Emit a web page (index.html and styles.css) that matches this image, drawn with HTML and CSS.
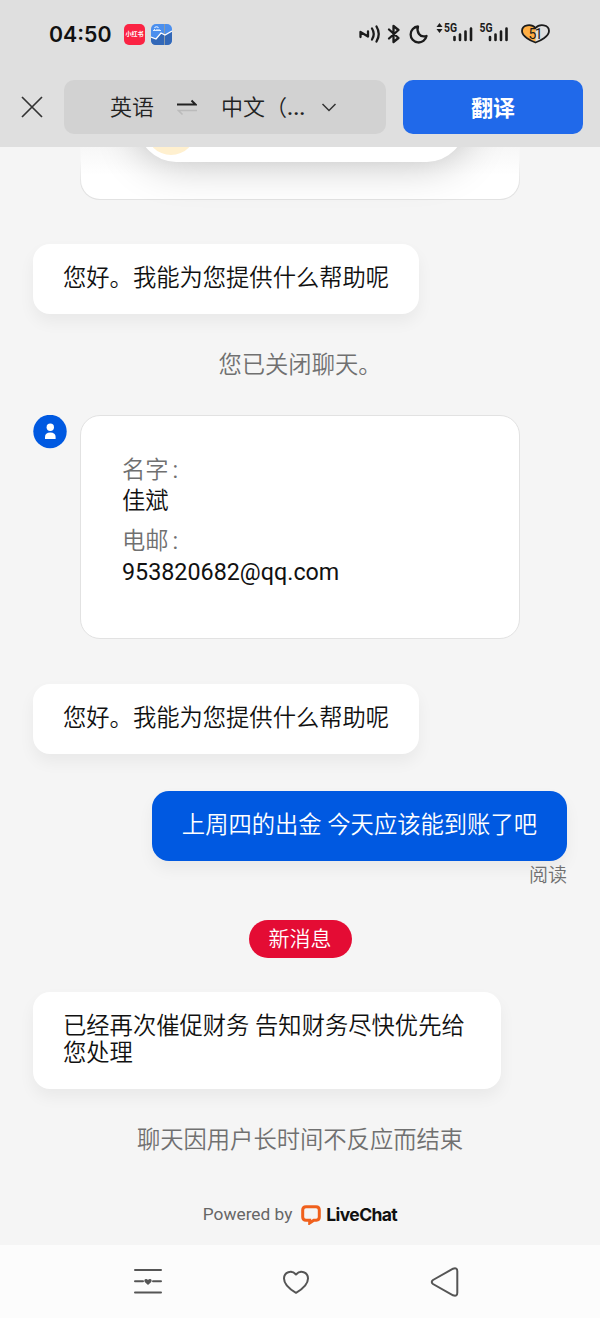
FILE: index.html
```html
<!DOCTYPE html>
<html lang="zh-CN">
  <head>
    <meta charset="UTF-8" />
    <meta name="viewport" content="width=device-width, initial-scale=1.0" />
    <title>LiveChat</title>
    <link rel="stylesheet" href="styles.css">
  </head>
  <body>
    <header class="header">
      <div class="status">
        <span class="time">04:50</span>
        <span class="app-red">小红书</span>
        <svg class="app-blue" width="21" height="21" viewBox="0 0 21 21">
          <rect width="21" height="21" rx="5" fill="#4b8fee" />
          <path d="M0 13l5 2 5-6 4 2 7-4v9q0 5-5 5H5q-5 0-5-5z" fill="#3268b8" />
          <path d="M13.5 0v21" stroke="#8a9aa8" stroke-width="1" />
          <path d="M0 13l5 2 5-6 4 2 7-4" fill="none" stroke="#fff" stroke-width="1.3" />
          <path d="M3.500 4q2-2.500 4 0M2 6.500h8M3.500 5v2M6 5v2M8 5v2" fill="none" stroke="#dcecff" stroke-width="1.2" />
        </svg>
        <svg class="signals" width="194" height="26" viewBox="358 21 194 26">
          <g fill="none" stroke="#1b1b1b" stroke-width="2.3" stroke-linecap="round" stroke-linejoin="round">
            <path d="M360.500 37v-5l7.500 4.500v-5M372 28.500q3.500 5.500 0 11M376.500 26.500q4.500 7.500 0 15" />
            <path d="M389 29.500l9.500 8.500-5 4v-16l5 4-9.500 8.500" />
            <path d="M418 26.500a8 8 0 1 0 8.500 9.500q-5 1.500-7.500-2t-1-7.500z" />
          </g>
          <path d="M436.500 27l3-4 3 4zM436.500 29l3 4 3-4z" fill="#1b1b1b" />
          <g class="net">
            <text x="444" y="32" textLength="13" lengthAdjust="spacingAndGlyphs">5G</text>
            <text x="479.500" y="32" textLength="13" lengthAdjust="spacingAndGlyphs">5G</text>
          </g>
          <path d="M454.500 37v3M460 34.500v5.500M465.500 31.500v8.500M471 28.500v11.500M490 37v3M495.500 34.500v5.500M501 31.500v8.500M506.500 28.500v11.500" stroke="#1b1b1b" stroke-width="2.600" stroke-linecap="round" />
          <path d="M535.500 42q-13-5.500-13-11.500c0-7 10-7 13-2.500v14z" fill="#ffae43" />
          <path d="M535.500 42.500c-4.500-1.500-13.500-6-13.500-11.500 0-6.500 9.500-7.500 13.500-3 4-4.500 13.500-3.500 13.500 3 0 5.500-9 10-13.500 11.500z" fill="none" stroke="#1b1b1b" stroke-width="1.800" />
          <text class="battery" x="528.500" y="39" textLength="14">51</text>
        </svg>
      </div>
      <div class="translate">
        <svg class="close" width="22" height="22" viewBox="0 0 22 22">
          <path d="M1 1l20 20M21 1L1 21" fill="none" stroke="#333" stroke-width="1.700" />
        </svg>
        <div class="languages">
          <span>英语</span>
          <svg class="swap" width="20" height="17" viewBox="0 0 20 17">
            <path d="M0 5.500h18.500L14.500 1.500" fill="none" stroke="#222" stroke-width="2" />
            <path d="M20 11.500H1.500l4 4" fill="none" stroke="#bbb" stroke-width="1.600" />
          </svg>
          <span class="to">中文（<span class="dots">...</span></span>
          <svg class="arrow" width="16" height="9" viewBox="0 0 16 9">
            <path d="M1.500 1l6.500 6.500L14.500 1" fill="none" stroke="#333" stroke-width="1.500" />
          </svg>
        </div>
        <button class="translate-btn">翻译</button>
      </div>
    </header>

    <main class="chat">
      <div class="history">
        <div class="old-card">
          <div class="popup"><span class="popup-dot"></span></div>
        </div>
      </div>
      <div class="bubble">您好。我能为您提供什么帮助呢</div>
      <p class="system closed">您已关闭聊天。</p>
      <div class="form-row">
        <svg class="avatar" width="34" height="34" viewBox="0 0 34 34">
          <circle cx="17" cy="16.500" r="16.700" fill="#0059e1" />
          <circle cx="17.300" cy="12.300" r="3.700" fill="#fff" />
          <path d="M12 24v-2q0-4.500 5.300-4.500t5.300 4.500v2z" fill="#fff" />
        </svg>
        <dl class="form-card">
          <dt>名字<span class="colon">:</span></dt>
          <dd>佳斌</dd>
          <dt>电邮<span class="colon">:</span></dt>
          <dd class="email">953820682@qq.com</dd>
        </dl>
      </div>
      <div class="bubble">您好。我能为您提供什么帮助呢</div>
      <div class="bubble own">上周四的出金 今天应该能到账了吧</div>
      <div class="read">阅读</div>
      <div class="new-message">新消息</div>
      <div class="bubble wide">已经再次催促财务 告知财务尽快优先给<br />您处理</div>
      <p class="system ended">聊天因用户长时间不反应而结束</p>
      <footer class="powered">
        <span>Powered by</span>
        <svg width="20" height="20" viewBox="0 0 20 20">
          <path d="M5 1.700h10q3.300 0 3.300 3.300v7q0 3-3 3.300h-2.500L8.700 18v-2.700H5q-3.300 0-3.300-3.300V5q0-3.300 3.300-3.300z" fill="none" stroke="#f0601c" stroke-width="3" />
        </svg>
        <strong>LiveChat</strong>
      </footer>
    </main>

    <nav class="nav">
      <svg width="28" height="28" viewBox="0 0 28 28">
        <path d="M1 2h26M1 13.200h8M19 13.200h8M1 24.500h26" fill="none" stroke="#555" stroke-width="2" stroke-linecap="round" />
        <path d="M14 17l-3.200-3q-1.200-2.300.8-3 1.500-.3 2.400 1 .9-1.300 2.400-1 2 .7.800 3z" fill="#555" />
      </svg>
      <svg width="28" height="26" viewBox="0 0 28 26">
        <path d="M14 23.800C10 21.500 2 16 2 9.500 2 3 9.500.5 14 5.500 18.500.5 26 3 26 9.500c0 6.500-8 12-12 14.300z" fill="none" stroke="#555" stroke-width="2" stroke-linejoin="round" />
      </svg>
      <svg width="30" height="32" viewBox="0 0 30 32">
        <path d="M3 14L23 2.700q4.300-1.500 4.300 2.500v21.600q0 4-4.300 2.500L3 18q-2.500-2 0-4z" fill="none" stroke="#555" stroke-width="2" />
      </svg>
    </nav>
  </body>
</html>
```

FILE: styles.css
```css
* {
  box-sizing: border-box;
}
body {
  margin: 0;
  height: 1318px;
  display: flex;
  flex-direction: column;
  overflow: hidden;
  background-color: #f5f5f5;
  color: #111;
  font-family: Roboto, "Noto Sans CJK SC", sans-serif;
  font-size: 23.3px;
  font-weight: 350;
  line-height: 27px;
}
svg {
  display: block;
  flex-shrink: 0;
}
.header {
  height: 147px;
  flex-shrink: 0;
  background-color: #dfdfdf;
  z-index: 1;
}
.status {
  height: 68px;
  display: flex;
  align-items: center;
  padding: 0 48px 0 49px;
}
.time {
  width: 75px;
  font-family: Inter, sans-serif;
  font-size: 21.3px;
  font-weight: 600;
}
.app-red {
  width: 21px;
  height: 21px;
  margin-right: 6px;
  border-radius: 5px;
  background-color: #fb2343;
  color: white;
  font-size: 6px;
  font-weight: bold;
  line-height: 20px;
  text-align: center;
  white-space: nowrap;
}
.signals {
  margin-left: auto;
}
.net {
  font-size: 12px;
  font-weight: 700;
  fill: #1b1b1b;
}
.battery {
  font-size: 14px;
  font-weight: 400;
  fill: #1b1b1b;
}
.translate {
  display: flex;
  align-items: center;
  padding: 12px 17px 0 21px;
}
.languages {
  width: 322px;
  height: 54px;
  margin: 0 17px 0 21px;
  padding-left: 46px;
  display: flex;
  align-items: center;
  border-radius: 10px;
  background-color: #d2d2d2;
  color: #222;
  font-size: 22px;
}
.swap {
  margin: 0 24px 0 23px;
}
.to {
  width: 82px;
  white-space: nowrap;
}
.dots {
  font-weight: 500;
}
.arrow {
  margin-left: 18px;
}
.translate-btn {
  flex: 1;
  height: 54px;
  padding: 0 0 2px;
  border: 0;
  border-radius: 10px;
  background-color: #2069ea;
  color: white;
  font-family: inherit;
  font-size: 22px;
  font-weight: 700;
}
.chat {
  height: 1098px;
  padding: 0 33px;
  display: flex;
  flex-direction: column;
  align-items: flex-start;
  overflow: hidden;
}
.history {
  height: 53px;
  margin: 0 0 44px 47px;
  display: flex;
  align-items: flex-end;
}
.old-card {
  width: 440px;
  height: 160px;
  flex-shrink: 0;
  padding: 0 54px 37px 57px;
  display: flex;
  border: 1px solid transparent;
  border-radius: 20px;
  background:
    linear-gradient(#f7f7f7 67%, white 85%) padding-box,
    linear-gradient(#f7f7f7 75%, #e2e2e2 92%) border-box;
}
.popup {
  flex: 1;
  padding: 50px 0 0 8px;
  border-radius: 38px;
  background-color: white;
  box-shadow: 0 2px 44px rgba(0, 0, 0, 0.24);
}
.popup-dot {
  display: block;
  width: 50px;
  height: 64px;
  border-radius: 32px;
  background-color: #fff0cf;
}
.bubble {
  padding: 21px 30px 22px;
  border-radius: 17px;
  background-color: white;
  box-shadow: 0 8px 16px rgba(0, 0, 0, 0.05);
  white-space: nowrap;
}
.own {
  align-self: flex-end;
  margin-top: 37px;
  background-color: #0059e1;
  color: white;
}
.wide {
  width: 468px;
}
.system {
  align-self: center;
  margin: 0;
  color: #707070;
}
.closed {
  margin: 38px 0 36px;
}
.form-row {
  display: flex;
  gap: 13px;
  margin-bottom: 45px;
}
.form-card {
  width: 440px;
  height: 224px;
  margin: 0;
  padding: 41px;
  border: 1px solid #e2e2e2;
  border-radius: 20px;
  background-color: white;
}
.form-card dt {
  height: 31px;
  color: #707070;
}
.colon {
  margin-left: 4px;
  font-weight: 400;
}
.form-card dd {
  height: 40px;
  margin: 0;
}
.form-card .email {
  font-weight: 400;
}
.read {
  align-self: flex-end;
  margin-top: 1px;
  color: #707070;
  font-size: 19px;
}
.new-message {
  align-self: center;
  height: 38px;
  margin: 31px 0 34px;
  padding: 0 20px;
  border-radius: 20px;
  background-color: #e40c34;
  color: white;
  font-size: 21px;
  line-height: 39px;
}
.ended {
  margin-top: 38px;
}
.powered {
  align-self: center;
  display: flex;
  align-items: center;
  margin-top: 47px;
  color: #666;
  font-size: 17.3px;
  font-weight: 400;
}
.powered svg {
  margin: 0 5px 0 9px;
}
.powered strong {
  color: #111;
  font-family: Inter, sans-serif;
  font-size: 17.5px;
  font-weight: 700;
  letter-spacing: -0.6px;
}
.nav {
  height: 73px;
  display: flex;
  align-items: center;
  justify-content: space-between;
  padding: 0 140px 0 134px;
  background-color: #fcfcfc;
  z-index: 1;
}
```
